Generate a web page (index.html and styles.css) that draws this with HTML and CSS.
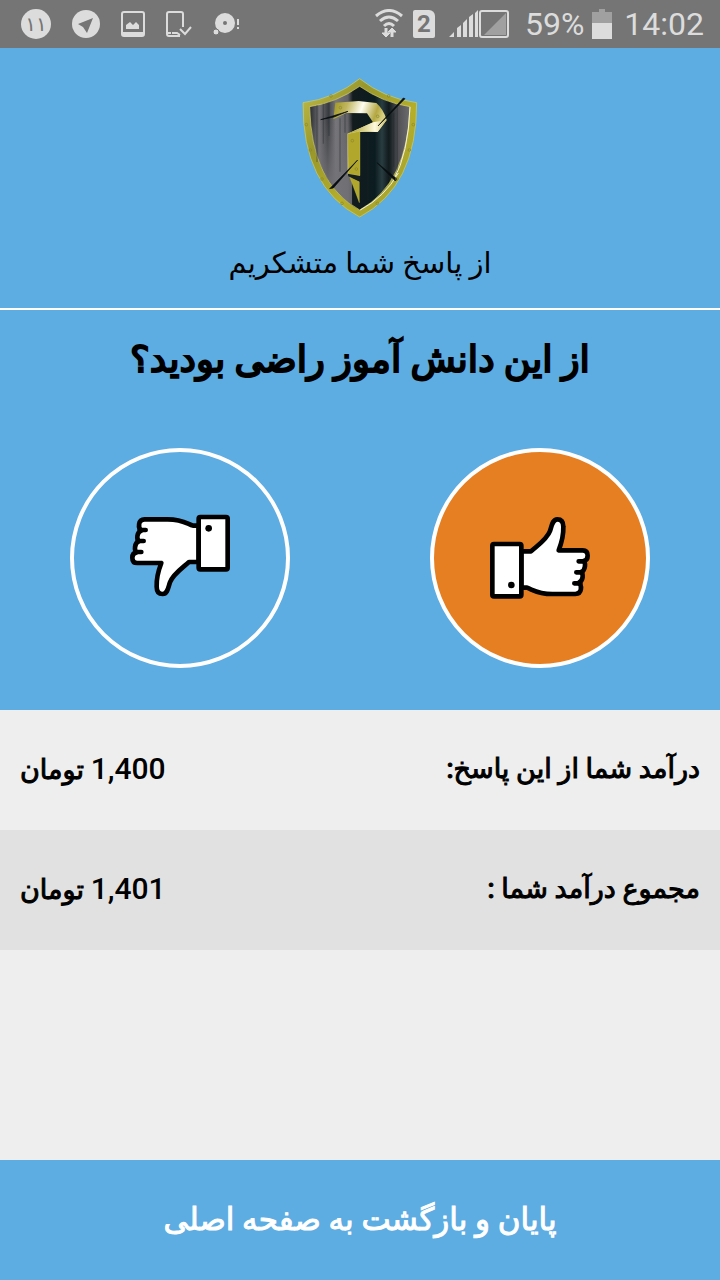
FILE: index.html
```html
<!DOCTYPE html>
<html lang="fa" dir="rtl">
<head>
<meta charset="utf-8">
<meta name="viewport" content="width=device-width, initial-scale=1">
<title>از پاسخ شما متشکریم</title>
<link rel="stylesheet" href="styles.css">
</head>
<body>
<div class="screen">
  <div class="status" dir="ltr">
    <div class="notices">
      <span class="badge">۱۱</span>
      <svg width="28" height="28" viewBox="0 0 28 28"><circle cx="14" cy="14" r="14" fill="#dcdcdc"/><path d="M21 8 6 14l5 3 4 6z" fill="#757575"/></svg>
      <svg width="24" height="26" viewBox="0 0 24 26"><rect x="1" y="1" width="22" height="24" rx="2" fill="none" stroke="#dcdcdc" stroke-width="2"/><path d="M2 21h20v3H2zM5 18v-4l4-3 3 3 3-3 3 3v4z" fill="#dcdcdc"/></svg>
      <svg width="26" height="26" viewBox="0 0 26 26" fill="none" stroke="#dcdcdc" stroke-width="2"><path d="M17 16V3q0-2-2-2H3Q1 1 1 3v20q0 2 2 2h11M1 22h4M6 22h5l3 2M14 18l5 5 6-7"/></svg>
      <svg width="28" height="24" viewBox="0 0 28 24" fill="#dcdcdc"><path fill-rule="evenodd" d="M2 11a10 10 0 1 0 20 0 10 10 0 1 0-20 0m8 0a2 2 0 1 1 4 0 2 2 0 1 1-4 0"/><circle cx="3" cy="20" r="3" stroke="#757575"/><path d="M24 7h2v6h-2zm0 8h2v2h-2z"/></svg>
    </div>
    <div class="system">
      <svg class="wifi" width="28" height="30" viewBox="0 0 28 30" fill="none" stroke="#dcdcdc" stroke-width="3"><path d="M1 7q13-11 26 0M5 12q9-8 18 0M9 17q5-5 10 0"/><path d="M11 19v7M17 28v-7" stroke-width="3"/><path d="m7 24 4 4 4-4zM13 23l4-4 4 4z" fill="#dcdcdc" stroke-width="1"/></svg>
      <span class="sim">2</span>
      <svg width="60" height="28" viewBox="0 0 60 28"><path d="m0 27 5-5v5zM8 27v-9l4-3v12zM14 27V13l4-4v18zM20 27V7l4-3v23zM26 27V3l3-3v27z" fill="#dcdcdc"/><rect x="31" y="1" width="28" height="26" rx="2" fill="none" stroke="#dcdcdc" stroke-width="2"/><path d="M35 25 57 3v22z" fill="#a0a0a0"/></svg>
      <span class="percent">59%</span>
      <svg width="20" height="30" viewBox="0 0 20 30"><path d="M7 0h6v3h7v11H0V3h7z" fill="#a0a0a0"/><path d="M0 14h20v16H0z" fill="#dcdcdc"/></svg>
      <span class="clock">14:02</span>
    </div>
  </div>

  <header class="thanks">
    <svg class="shield" width="116" height="140" viewBox="38 24 346 420" role="img" aria-label="نشان">
      <defs>
        <linearGradient id="rim" x1="0" y1="0" x2="1" y2="1"><stop offset="0" stop-color="#c5c04d"/><stop offset=".3" stop-color="#99972b"/><stop offset=".6" stop-color="#b5ae2a"/><stop offset="1" stop-color="#9c9c32"/></linearGradient>
        <linearGradient id="steel"><stop offset="0" stop-color="#282c30"/><stop offset=".1" stop-color="#717074"/><stop offset=".18" stop-color="#3c3f43"/><stop offset=".26" stop-color="#77767a"/><stop offset=".38" stop-color="#626266"/><stop offset=".43" stop-color="#131b1e"/><stop offset=".65" stop-color="#0b1c20"/><stop offset=".72" stop-color="#293d41"/><stop offset=".79" stop-color="#0f191c"/><stop offset=".88" stop-color="#515155"/><stop offset="1" stop-color="#6d6d70"/></linearGradient>
        <linearGradient id="low" x1="0" y1="0" x2="0" y2="1"><stop offset=".25" stop-color="#737276" stop-opacity="0"/><stop offset=".8" stop-color="#737276" stop-opacity=".85"/></linearGradient>
        <linearGradient id="gold" gradientUnits="userSpaceOnUse" x1="135" y1="100" x2="275" y2="150"><stop offset="0" stop-color="#a39a24"/><stop offset=".25" stop-color="#c1b65f"/><stop offset=".55" stop-color="#fffdf1"/><stop offset=".85" stop-color="#b4a842"/><stop offset="1" stop-color="#d8d080"/></linearGradient>
        <linearGradient id="tip"><stop offset=".1" stop-color="#ada52e"/><stop offset=".7" stop-color="#fff9df"/><stop offset="1" stop-color="#c9be68"/></linearGradient>
      </defs>
      <path d="M210 26Q283 85 381 98 382 350 210 441 38 350 40 98 137 85 210 26Z" fill="url(#rim)" stroke="#d4d05b" stroke-width="2"/>
      <path d="M210 49Q280 98 361 110 355 340 210 420 65 340 60 110 140 98 210 49Z" fill="url(#steel)" stroke="#d9d578" stroke-width="2"/>
      <path d="M61 112Q130 100 187 64V405Q64 320 61 112Z" fill="url(#low)"/>
      <path d="M82 106v170M101 101v120M118 98v100M151 145v160M166 120v68M312 130v160M323 110v200M298 102v220M261 190v130M235 200v190" stroke="#1d2428" stroke-width="4" opacity=".35"/>
      <path d="M361 111Q356 250 312 330M212 420Q286 380 326 309" fill="none" stroke="#f4f2dc" stroke-width="3"/>
      <path d="M174 191 250 157 232 130 170 129 131 148 137 98 207 93 260 99Q282 118 291 150L264 186H211V328L174 315Z" fill="url(#gold)"/>
      <path d="M250 157 291 150 264 186 211 184 174 191Z" fill="url(#tip)"/>
      <path d="m174 191 37-7v133l-35-5zM180 320l29 14v64z" fill="#b1a72c" stroke="#d0c757"/>
      <path d="M174 311 212 318V336L176 319Z" fill="#17201f"/>
      <path d="m93 149 82-25-42 17zM265 168l76-84 5 2zM120 356l84-86-73 84zM262 278l60 49-5 6z" fill="#080d10" stroke="#080d10" stroke-width="2"/>
      <g fill="none" stroke="#8a8630" stroke-width="2"><circle cx="124" cy="78" r="4"/><circle cx="297" cy="78" r="4"/><circle cx="50" cy="164" r="4"/><circle cx="371" cy="164" r="4"/><circle cx="62" cy="240" r="4"/><circle cx="359" cy="240" r="4"/><circle cx="97" cy="327" r="4"/><circle cx="322" cy="327" r="4"/><circle cx="157" cy="400" r="4"/><circle cx="263" cy="400" r="4"/><circle cx="152" cy="113" r="4"/><circle cx="264" cy="139" r="4"/><circle cx="188" cy="212" r="4"/><circle cx="200" cy="297" r="4"/></g>
    </svg>
    <p class="message">از پاسخ شما متشکریم</p>
  </header>

  <section class="question">
    <h1 class="title">از این دانش آموز راضی بودید؟</h1>
    <div class="votes">
      <button class="vote chosen" type="button" aria-label="راضی بودم" aria-pressed="true">
        <svg width="100" height="100" viewBox="210 204 300 300">
          <g id="thumb" fill="#fff" stroke="#000" stroke-width="14" stroke-linejoin="round" stroke-linecap="round">
            <path d="M304 334h29c20-18 48-36 57-61 5-14 7-35 22-35 13 0 18 9 18 22 1 28-5 48-14 71h72c11 0 15 7 15 16 0 10-5 15-13 16 8 4 7 29-7 33 8 6 7 27-7 32 10 7 11 34-10 34h-69c-43 0-55-11-76-19h-17z"/>
            <path d="M476 364h18M469 397h18M463 430h18" fill="none"/>
            <rect x="217" y="312" width="87" height="157" rx="5"/>
            <circle cx="274" cy="435" r="10" fill="#000" stroke="none"/>
          </g>
        </svg>
      </button>
      <button class="vote" type="button" aria-label="راضی نبودم" aria-pressed="false">
        <svg width="100" height="100" viewBox="210 204 300 300"><use href="#thumb" transform="rotate(180 360 350)"/></svg>
      </button>
    </div>
  </section>

  <main class="income">
    <dl class="rows">
      <div class="row"><dt>درآمد شما از این پاسخ:</dt><dd><span class="amount">1,400</span> تومان</dd></div>
      <div class="row shaded"><dt>مجموع درآمد شما :</dt><dd><span class="amount">1,401</span> تومان</dd></div>
    </dl>
  </main>

  <button class="finish" type="button">پایان و بازگشت به صفحه اصلی</button>
</div>
</body>
</html>
```
FILE: styles.css
```css
* { box-sizing: border-box; }

body {
  margin: 0;
  background: #eee;
  color: #000;
  font-family: Roboto, "DejaVu Sans", sans-serif;
}

.screen {
  display: flex;
  flex-direction: column;
  min-height: 100vh;
}

svg { display: block; flex: none; }

.status {
  display: flex;
  justify-content: space-between;
  align-items: center;
  height: 48px;
  padding: 0 16px 0 21px;
  background: #757575;
  color: #dcdcdc;
}

.notices { display: flex; align-items: center; gap: 21px; }

.badge {
  width: 30px;
  height: 30px;
  border-radius: 50%;
  background: #dcdcdc;
  color: #757575;
  font-size: 20px;
  font-weight: 500;
  line-height: 30px;
  text-align: center;
}

.system { display: flex; align-items: center; gap: 8px; }
.wifi { margin-right: 2px; }

.sim {
  width: 22px;
  height: 28px;
  margin-right: 6px;
  border-radius: 2px 6px 2px 2px;
  background: #dcdcdc;
  color: #757575;
  font-size: 24px;
  font-weight: bold;
  line-height: 28px;
  text-align: center;
}

.percent, .clock { font-size: 32px; line-height: 48px; }
.percent { margin-left: 8px; }
.clock { margin-left: 4px; }

.thanks {
  display: flex;
  flex-direction: column;
  align-items: center;
  gap: 20px;
  padding: 30px 20px 20px;
  border-bottom: 2px solid #fff;
  background: #5dace2;
}

.message { margin: 0; font-size: 29px; line-height: 50px; }

.question { padding: 20px 0 42px; background: #5dace2; }

.title {
  margin: 0;
  font-size: 37px;
  font-weight: 500;
  line-height: 60px;
  text-align: center;
  -webkit-text-stroke: 2px currentColor;
}

.votes {
  display: grid;
  grid-template-columns: 1fr 1fr;
  justify-items: center;
  margin-top: 58px;
}

.vote {
  display: grid;
  place-items: center;
  width: 220px;
  height: 220px;
  padding: 0;
  border: 4px solid #fff;
  border-radius: 50%;
  background: transparent;
}

.chosen { background: #e57f22; }

.income { flex: 1; }
.rows { margin: 0; }

.row {
  display: flex;
  justify-content: space-between;
  align-items: center;
  min-height: 120px;
  padding: 0 20px 2px;
  font-size: 27px;
  font-weight: 500;
  line-height: 40px;
  -webkit-text-stroke: 1px currentColor;
}

.row dd { margin: 0; }
.amount { font-size: 30px; -webkit-text-stroke: 0; }
.shaded { background: #e1e1e1; }

.finish {
  min-height: 120px;
  padding: 0 20px 2px;
  border: 0;
  background: #5dace2;
  color: #fff;
  font: 500 31px Roboto, "DejaVu Sans", sans-serif;
  -webkit-text-stroke: 1px currentColor;
}
```
